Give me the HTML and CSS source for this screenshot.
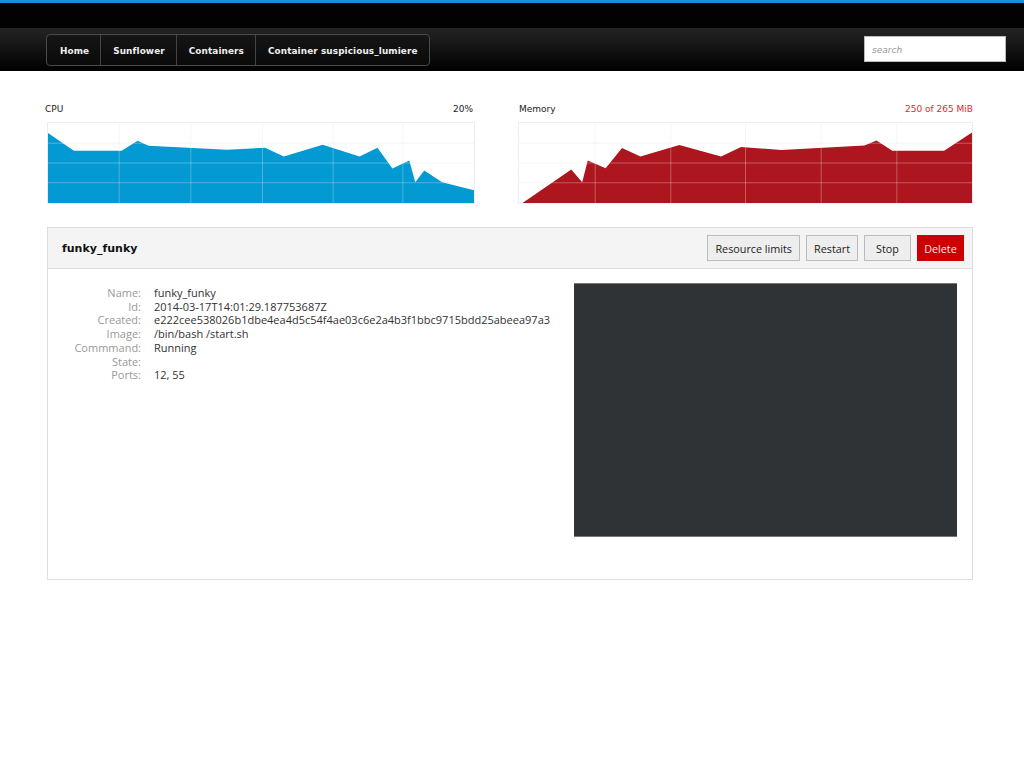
FILE: index.html
```html
<!DOCTYPE html>
<html>
<head>
<meta charset="utf-8">
<link rel="stylesheet" href="styles.css">
</head>
<body>
<header class="masthead">
  <div class="topband"></div>
  <nav class="navbar">
    <ul class="crumbs">
      <li>Home</li>
      <li>Sunflower</li>
      <li>Containers</li>
      <li>Container suspicious_lumiere</li>
    </ul>
    <input class="search" type="text" placeholder="search">
  </nav>
</header>

<main class="content">
  <section class="charts">
    <div class="chart cpu">
      <div class="chart-head"><span>CPU</span><span class="val">20%</span></div>
      <svg class="plot" viewBox="0 0 428 81" preserveAspectRatio="none">
        <polygon fill="#0399d3" points="0,81 0,10 26,28 74,28 90,18 101,23 180,27 218,25 237,34 276,22 313,34 331,25 346,46 363,38 369,60 378,48 396,60 428,68 428,81"/>
        <g stroke="rgba(230,230,230,0.35)" stroke-width="1">
          <line x1="0" y1="20.5" x2="428" y2="20.5"/>
          <line x1="0" y1="40.5" x2="428" y2="40.5"/>
          <line x1="0" y1="60.5" x2="428" y2="60.5"/>
          <line x1="71.5" y1="0" x2="71.5" y2="81"/>
          <line x1="143.5" y1="0" x2="143.5" y2="81"/>
          <line x1="215.5" y1="0" x2="215.5" y2="81"/>
          <line x1="286.5" y1="0" x2="286.5" y2="81"/>
          <line x1="356.5" y1="0" x2="356.5" y2="81"/>
        </g>
      </svg>
    </div>
    <div class="chart mem">
      <div class="chart-head"><span>Memory</span><span class="val red">250 of 265 MiB</span></div>
      <svg class="plot" viewBox="0 0 455 81" preserveAspectRatio="none">
        <polygon fill="#ad161e" points="3.5,81 52.5,47 63.5,60 69,38 87,45.7 103.5,25.3 122,34 161,22.3 203,34 223,24.3 263.5,27.3 347,22.7 359,17.7 375,28 427,28 455,9.7 455,81"/>
        <g stroke="rgba(230,230,230,0.35)" stroke-width="1">
          <line x1="0" y1="20.5" x2="455" y2="20.5"/>
          <line x1="0" y1="40.5" x2="455" y2="40.5"/>
          <line x1="0" y1="60.5" x2="455" y2="60.5"/>
          <line x1="76.5" y1="0" x2="76.5" y2="81"/>
          <line x1="152.5" y1="0" x2="152.5" y2="81"/>
          <line x1="227.5" y1="0" x2="227.5" y2="81"/>
          <line x1="303.5" y1="0" x2="303.5" y2="81"/>
          <line x1="379.5" y1="0" x2="379.5" y2="81"/>
        </g>
      </svg>
    </div>
  </section>

  <section class="panel">
    <div class="panel-head">
      <h2 class="title">funky_funky</h2>
      <div class="actions">
        <button class="btn">Resource limits</button>
        <button class="btn">Restart</button>
        <button class="btn">Stop</button>
        <button class="btn danger">Delete</button>
      </div>
    </div>
    <div class="panel-body">
      <dl class="details">
        <dt>Name:</dt><dd>funky_funky</dd>
        <dt>Id:</dt><dd>2014-03-17T14:01:29.187753687Z</dd>
        <dt>Created:</dt><dd>e222cee538026b1dbe4ea4d5c54f4ae03c6e2a4b3f1bbc9715bdd25abeea97a3</dd>
        <dt>Image:</dt><dd>/bin/bash /start.sh</dd>
        <dt>Commmand:</dt><dd>Running</dd>
        <dt>State:</dt><dd></dd>
        <dt>Ports:</dt><dd>12, 55</dd>
      </dl>
      <div class="terminal"></div>
    </div>
  </section>
</main>
</body>
</html>
```

FILE: styles.css
```css
* { box-sizing: border-box; }
html, body { margin: 0; padding: 0; background: #fff; }
body { font-family: "DejaVu Sans", sans-serif; color: #222; }

.topband {
  height: 28px;
  background: #020202;
  border-top: 3px solid #1b8fd2;
}
.navbar {
  height: 43px;
  background: linear-gradient(#242424, #000);
  display: flex;
  align-items: flex-start;
  justify-content: space-between;
  padding: 6px 18px 0 46px;
}
.crumbs {
  list-style: none;
  margin: 0;
  padding: 0;
  display: flex;
  height: 32px;
  border: 1px solid #4a4a4a;
  border-radius: 4px;
  background: linear-gradient(#151515, #0a0a0a);
}
.crumbs li {
  color: #f0f0f0;
  font-size: 8.9px;
  font-weight: bold;
  line-height: 31px;
  padding: 1px 11px 0 12px;
  border-left: 1px solid #444;
  letter-spacing: 0.1px;
}
.crumbs li:first-child { border-left: none; padding-left: 13px; }
.search {
  margin-top: 2px;
  width: 142px;
  height: 26px;
  border: 1px solid #bbb;
  background: #fff;
  padding: 1px 7px 0;
  font-family: "DejaVu Sans", sans-serif;
  font-size: 9px;
  outline: none;
}
.search::placeholder { color: #999; font-style: italic; }

.content {
  width: 926px;
  margin: 0 0 0 47px;
}
.charts {
  display: flex;
  justify-content: space-between;
  margin-top: 31px;
}
.chart.cpu { width: 428px; }
.chart.mem { width: 455px; }
.chart-head {
  display: flex;
  justify-content: space-between;
  font-size: 9px;
  color: #222;
  height: 20px;
  padding-top: 1px;
  line-height: 12px;
  margin-left: -2px;
}
.chart.mem .chart-head { margin-left: 1px; }
.chart-head .val { margin-right: 2px; }
.chart-head .red { color: #e8282c; margin-right: 0; }
.plot {
  display: block;
  width: 100%;
  height: 82px;
  border: 1px solid #eee;
  background: #fff;
}

.panel {
  margin-top: 23px;
  border: 1px solid #ddd;
  height: 353px;
}
.panel-head {
  height: 41px;
  background: #f4f4f4;
  border-bottom: 1px solid #ddd;
  display: flex;
  align-items: center;
  justify-content: space-between;
  padding: 0 8px 0 14px;
}
.title {
  margin: 0;
  font-size: 11px;
  font-weight: bold;
  color: #111;
}
.actions { display: flex; gap: 6px; }
.btn {
  font-family: "Open Sans", sans-serif;
  font-size: 10.8px;
  color: #222;
  height: 26px;
  min-width: 47px;
  padding: 0 7px;
  background: #eee;
  border: 1px solid #bbb;
  border-radius: 0;
}
.btn.danger {
  background: #cc0000;
  border: none;
  padding: 0 6px;
  color: #fbe5e5;
}

.panel-body {
  display: flex;
  justify-content: space-between;
  padding: 14px 15px 0 15px;
}
.details {
  margin: 3px 0 0 0;
  display: grid;
  grid-template-columns: 78px auto;
  column-gap: 13px;
  align-content: start;
  font-family: "Open Sans", sans-serif;
  font-size: 11px;
  line-height: 13.7px;
}
.details dt { color: #999; text-align: right; }
.details dd { margin: 0; color: #333; min-height: 13.7px; }
.terminal {
  width: 383px;
  height: 254px;
  background: #2f3336;
  border-top: 1px solid #777;
  border-bottom: 1px solid #777;
}
```
